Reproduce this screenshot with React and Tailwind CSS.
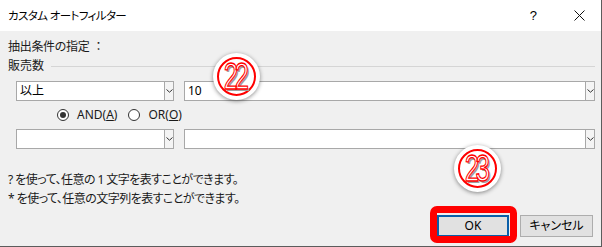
import React from 'react'

const font = 'font-["Noto_Sans","Noto_Sans_CJK_JP",sans-serif] [font-feature-settings:"palt"]'

function Chevron() {
  return (
    <svg width="7" height="4" viewBox="0 0 7 4" className="block">
      <path d="M0.5 0.5 L3.5 3.2 L6.5 0.5" fill="none" stroke="#333" strokeWidth="1" />
    </svg>
  )
}

function Combo({ width, value }) {
  return (
    <div className={`${width} h-[20px] border border-[#a8a8a8] bg-white flex`}>
      <div className="flex-1 pl-[3px] text-[12px] leading-[18px] text-black">{value}</div>
      <div className="w-[9px] border-l border-[#a8a8a8] bg-[#f4f4f4] flex items-center justify-center">
        <Chevron />
      </div>
    </div>
  )
}

function Radio({ checked }) {
  return (
    <span className="w-[12px] h-[12px] rounded-full border border-[#333] bg-white flex items-center justify-center">
      {checked && <span className="w-[6px] h-[6px] rounded-full bg-[#333]" />}
    </span>
  )
}

function Callout({ n, className }) {
  return (
    <div className={`absolute w-[47px] h-[47px] rounded-full bg-white shadow-[0_1px_4px_rgba(0,0,0,0.45)] flex items-center justify-center ${className}`}>
      <div className="w-[39px] h-[39px] rounded-full border-2 border-[#ff0000] flex items-center justify-center">
        <span className="font-['Liberation_Sans',sans-serif] text-[36px] leading-none tracking-[-5px] pr-[4px] mt-[1px] scale-x-[0.72] text-white [-webkit-text-stroke:1.3px_#ff0000] [text-shadow:2px_2px_0_#a0a0a0]">
          {n}
        </span>
      </div>
    </div>
  )
}

export default function App() {
  return (
    <div className={`relative w-[602px] h-[247px] overflow-hidden bg-[#f0f0f0] border-r border-b border-[#5c5c5c] text-[#1a1a1a] ${font}`}>
      {/* Title bar */}
      <div className="h-[31px] bg-white flex items-center pl-[8px] text-[11.5px] tracking-[-0.6px] text-black">
        <span>カスタム オートフィルター</span>
        <span className="ml-auto mr-[37px] text-[13px] tracking-normal font-['Liberation_Sans',sans-serif]">?</span>
        <svg width="11" height="11" viewBox="0 0 11 11" className="mr-[16px]">
          <path d="M0.5 0.5 L10.5 10.5 M10.5 0.5 L0.5 10.5" stroke="#111" strokeWidth="1" />
        </svg>
      </div>

      <div className="pl-[8px] pr-[6px] text-[12px]">
        <div className="mt-[7px] h-[18px] leading-[18px] tracking-[-0.3px]">
          抽出条件の指定<span className="ml-[3px] [font-feature-settings:normal]">：</span>
        </div>
        <div className="mt-[1px] h-[18px] flex items-center">
          <span className="leading-[18px]">販売数</span>
          <div className="flex-1 ml-[7px] h-px bg-[#d5d5d5]" />
        </div>

        <div className="mt-[6px] pl-[8px] flex gap-[10px]">
          <Combo width="w-[158px]" value="以上" />
          <Combo width="flex-1" value="10" />
        </div>

        <div className="h-[28px] flex items-center pl-[49px]">
          <Radio checked />
          <span className="ml-[8px] leading-[18px]">AND(<span className="underline">A</span>)</span>
          <span className="ml-[11px]"><Radio /></span>
          <span className="ml-[8px] leading-[18px]">OR(<span className="underline">O</span>)</span>
        </div>

        <div className="pl-[8px] flex gap-[10px]">
          <Combo width="w-[158px]" value="" />
          <Combo width="flex-1" value="" />
        </div>

        <div className="mt-[21px] h-[19px] leading-[19px] tracking-[-0.55px]">? を使って、任意の 1 文字を表すことができます。</div>
        <div className="h-[19px] leading-[19px] tracking-[-0.55px]">* を使って、任意の文字列を表すことができます。</div>

        <div className="mt-[7px] flex justify-end gap-[11px] pr-[2px]">
          <button className="w-[72px] h-[22px] bg-[#e1e1e1] border-2 border-[#0a5ea8] text-[12px] leading-none text-black">OK</button>
          <button className="w-[73px] h-[22px] bg-[#e1e1e1] border border-[#adadad] text-[12px] leading-none text-black">キャンセル</button>
        </div>
      </div>

      {/* Highlight around OK */}
      <div className="absolute left-[430px] top-[206px] w-[87px] h-[37px] rounded-[7px] border-[7px] border-[#ff0000]" />

      <Callout n="22" className="left-[213px] top-[53px]" />
      <Callout n="23" className="left-[454px] top-[145px]" />
    </div>
  )
}
